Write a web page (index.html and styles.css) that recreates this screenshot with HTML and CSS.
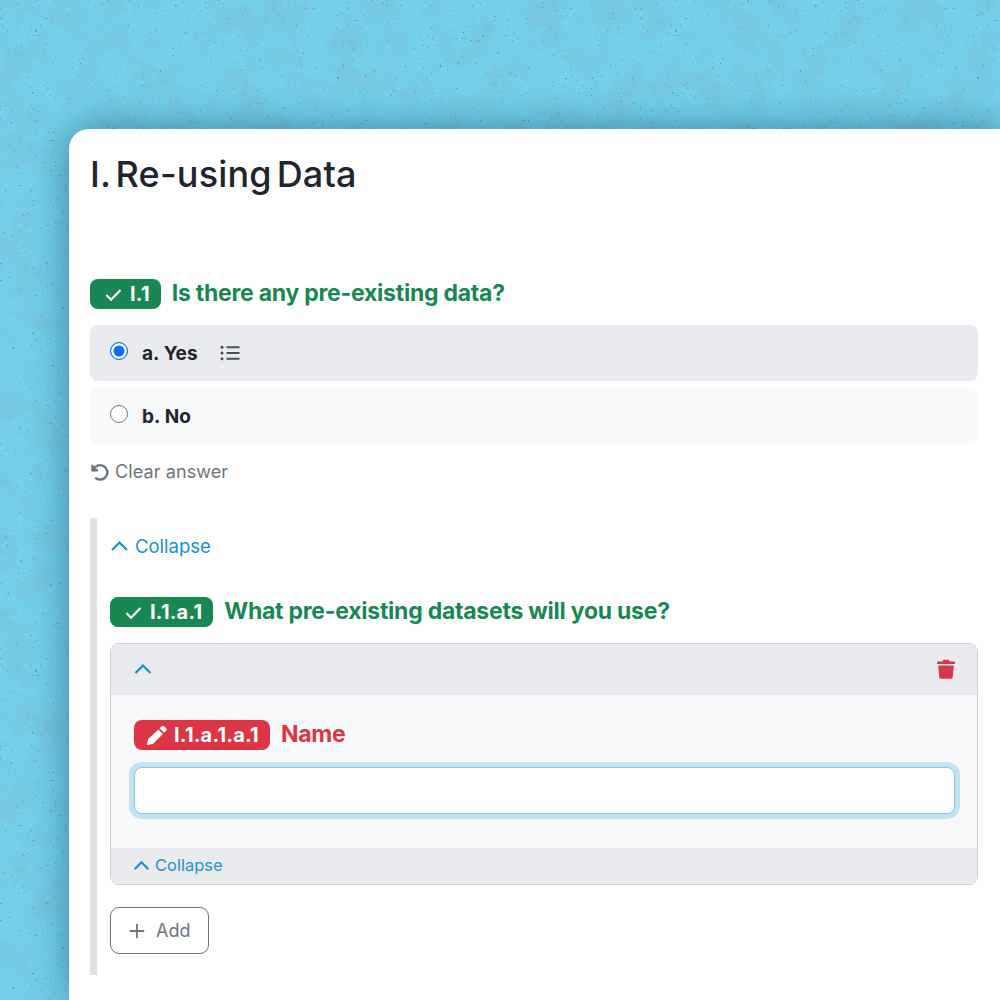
FILE: index.html
```html
<!DOCTYPE html>
<html lang="en">
<head>
<meta charset="utf-8">
<title>Re-using Data</title>
<link rel="stylesheet" href="styles.css">
</head>
<body>
<svg class="paper" width="1000" height="1000" aria-hidden="true">
  <filter id="grain" x="0" y="0" width="100%" height="100%">
    <feTurbulence type="fractalNoise" baseFrequency="0.03" numOctaves="5" seed="7"/>
    <feColorMatrix type="matrix" values="0 0 0 0 0.2  0 0 0 0 0.52  0 0 0 0 0.68  1.5 0 0 0 -0.6"/>
  </filter>
  <filter id="specks" x="0" y="0" width="100%" height="100%">
    <feTurbulence type="fractalNoise" baseFrequency="0.4" numOctaves="2" seed="3"/>
    <feColorMatrix type="matrix" values="0 0 0 0 0.08  0 0 0 0 0.3  0 0 0 0 0.42  0 9 0 0 -6.6"/>
  </filter>
  <rect width="1000" height="1000" filter="url(#grain)"/>
  <rect width="1000" height="1000" filter="url(#specks)"/>
</svg>
<main class="window">
  <h1 class="title">I. Re-using Data</h1>

  <div class="question q-top">
    <span class="badge badge-ok">
      <svg class="ico" viewBox="0 0 16 16"><path d="M2 8.500l3.900 3.900 8-8.200" fill="none" stroke="currentColor" stroke-width="1.800"/></svg>
      I.1
    </span>
    <span class="q-text q-ok">Is there any pre-existing data?</span>
  </div>

  <div class="option option-on">
    <span class="radio radio-on"></span>
    <span class="opt-label">a. Yes</span>
    <svg class="list-ico" viewBox="0 0 20 16"><g fill="#495057"><circle cx="2" cy="2.2" r="1.5"/><circle cx="2" cy="8" r="1.5"/><circle cx="2" cy="13.8" r="1.5"/></g><path d="M6.5 2.2H19.5M6.5 8H19.5M6.5 13.8H19.5" stroke="#495057" stroke-width="1.9"/></svg>
  </div>
  <div class="option">
    <span class="radio"></span>
    <span class="opt-label">b. No</span>
  </div>

  <div class="clear">
    <svg class="clear-ico" viewBox="0 0 18 18"><path d="M2.4 2.6v5.200h5.200" fill="none" stroke="#6c757d" stroke-width="2.3"/><path d="M3.200 7.600A6.800 6.800 0 1 1 5 14.800" fill="none" stroke="#6c757d" stroke-width="2.300"/></svg>
    Clear answer
  </div>

  <section class="nested">
    <div class="collapse">
      <svg class="chev" viewBox="0 0 18 12"><path d="M1.5 10L9 2.5 16.5 10" fill="none" stroke="currentColor" stroke-width="2.2"/></svg>
      Collapse
    </div>

    <div class="question q-sub">
      <span class="badge badge-ok">
        <svg class="ico" viewBox="0 0 16 16"><path d="M2 8.500l3.900 3.900 8-8.200" fill="none" stroke="currentColor" stroke-width="1.800"/></svg>
        I.1.a.1
      </span>
      <span class="q-text q-ok">What pre-existing datasets will you use?</span>
    </div>

    <div class="card">
      <div class="card-head">
        <svg class="chev head-chev" viewBox="0 0 18 12"><path d="M1.5 10L9 2.5 16.5 10" fill="none" stroke="currentColor" stroke-width="2.2"/></svg>
        <svg class="trash" viewBox="0 0 18 20"><path fill="#dc3545" d="M6.2 0.8h5.6l.8 1.7H17a1 1 0 0 1 1 1v1a.6.6 0 0 1-.6.6H.6A.6.6 0 0 1 0 4.500v-1a1 1 0 0 1 1-1h4.400zM1.300 6.600h15.400l-.9 11.400a1.900 1.900 0 0 1-1.900 1.800H4.100a1.900 1.900 0 0 1-1.900-1.800z"/></svg>
      </div>
      <div class="card-body">
        <div class="question">
          <span class="badge badge-bad badge-pen">
            <svg class="ico ico-pen" viewBox="0 0 20 20"><path fill="currentColor" d="M14.600 1.300a1.800 1.800 0 0 1 2.500 0l2 2a1.800 1.800 0 0 1 0 2.500l-2 2-4.500-4.500zM11.400 4.500l4.500 4.500L6 18.900l-5.600 1.100a.4.400 0 0 1-.4-.4L1.100 14z"/></svg>
            I.1.a.1.a.1
          </span>
          <span class="q-text q-bad">Name</span>
        </div>
        <input class="field" type="text" aria-label="Name">
      </div>
      <div class="card-foot">
        <svg class="chev foot-chev" viewBox="0 0 18 12"><path d="M1.500 10L9 2.500 16.500 10" fill="none" stroke="currentColor" stroke-width="2.200"/></svg>
        <span class="foot-label">Collapse</span>
      </div>
    </div>

    <button class="add" type="button">
      <svg class="plus" viewBox="0 0 16 16"><path d="M8 .8v14.400M.8 8h14.400" stroke="#6c757d" stroke-width="1.800"/></svg>
      Add
    </button>
  </section>
</main>
</body>
</html>
```
FILE: styles.css
```css
* { box-sizing: border-box; }
html, body { margin: 0; height: 1000px; overflow: hidden; }
body {
  position: relative;
  background: #74d0ea;
  font-family: Inter, "Liberation Sans", sans-serif;
  padding: 129px 0 0 69px;
}
.paper { position: absolute; left: 0; top: 0; }
.window {
  position: relative;
  height: 871px;
  background: #fff;
  border-top-left-radius: 20px;
  box-shadow: 0 0 38px rgba(10, 70, 100, .55);
  padding: 21px 22px 0 21px;
  color: #212529;
}
.title {
  margin: 0;
  font-size: 36px;
  line-height: 48px;
  font-weight: 500;
  letter-spacing: .2px;
  word-spacing: -5px;
}
.question { display: flex; align-items: center; gap: 11px; }
.q-top { margin-top: 81px; }
.badge {
  display: inline-flex;
  align-items: center;
  gap: 7px;
  height: 30px;
  padding: 0 11px 0 14px;
  border-radius: 8px;
  color: #fff;
  font-size: 20px;
  font-weight: 700;
  letter-spacing: .2px;
}
.badge-ok { background: #198754; }
.badge-bad { background: #dc3545; }
.badge-pen { padding-left: 13px; gap: 7px; }
.ico { width: 19px; height: 19px; }
.ico-pen { width: 20px; height: 20px; }
.q-text { margin-top: -2px; font-size: 23px; font-weight: 700; letter-spacing: -.25px; }
.q-ok { color: #198754; }
.q-bad { color: #dc3545; }
.option {
  display: flex;
  align-items: center;
  height: 56px;
  margin-top: 7px;
  padding-left: 20px;
  background: #f8f9fa;
  border-radius: 8px;
}
.q-top + .option { margin-top: 16px; }
.option-on { background: #e9ebef; }
.radio {
  width: 18px;
  height: 18px;
  margin-top: -5px;
  border: 1px solid #777;
  border-radius: 50%;
  background: #fff;
}
.radio-on {
  border: 1.500px solid #0d6efd;
  background: #0d6efd;
  box-shadow: inset 0 0 0 2.500px #fff;
}
.opt-label { margin-left: 14px; font-size: 19px; font-weight: 700; word-spacing: .5px; color: #212529; }
.list-ico { width: 20px; height: 16px; margin-left: 22px; }
.clear {
  display: flex;
  align-items: center;
  gap: 6px;
  margin-top: 15px;
  height: 24px;
  color: #6c757d;
  font-size: 18px;
  letter-spacing: .1px;
}
.clear-ico { width: 19px; height: 19px; }
.nested {
  margin-top: 35px;
  height: 457px;
  padding: 17px 0 0 13px;
  border-left: 7px solid #dee2e6;
}
.collapse {
  display: flex;
  align-items: center;
  gap: 6px;
  height: 22px;
  color: #1094d3;
  font-size: 18.500px;
}
.chev { width: 19px; height: 12px; color: #1094d3; }
.q-sub { margin-top: 40px; }
.card {
  margin-top: 16px;
  border: 1.500px solid #c8ced4;
  border-radius: 9px;
  overflow: hidden;
}
.card-head {
  display: flex;
  align-items: center;
  justify-content: space-between;
  height: 51px;
  padding: 0 22px 2px 23px;
  background: #e9ebef;
}
.head-chev { width: 18px; }
.trash { width: 18px; height: 20px; }
.card-body { height: 153px; padding: 25px 22px 0 23px; background: #f8f9fa; }
.field {
  display: block;
  width: 821px;
  height: 47px;
  margin-top: 17px;
  background: #fff;
  border: 1.500px solid #86c6e6;
  border-radius: 8px;
  box-shadow: 0 0 0 5px #c3e3f3;
  outline: none;
}
.card-foot {
  display: flex;
  align-items: center;
  gap: 5px;
  height: 36px;
  padding: 0 0 2px 22px;
  background: #e9ebef;
  color: #1e93c8;
  font-size: 16.500px;
}
.foot-chev { width: 17px; height: 11px; }
.add {
  display: flex;
  align-items: center;
  gap: 11px;
  width: 99px;
  height: 47px;
  margin-top: 22px;
  padding: 0 0 0 18px;
  background: #fff;
  border: 1.500px solid #6c757d;
  border-radius: 9px;
  color: #6c757d;
  font: 400 18px Inter, "Liberation Sans", sans-serif;
}
.plus { width: 16px; height: 16px; }
```
